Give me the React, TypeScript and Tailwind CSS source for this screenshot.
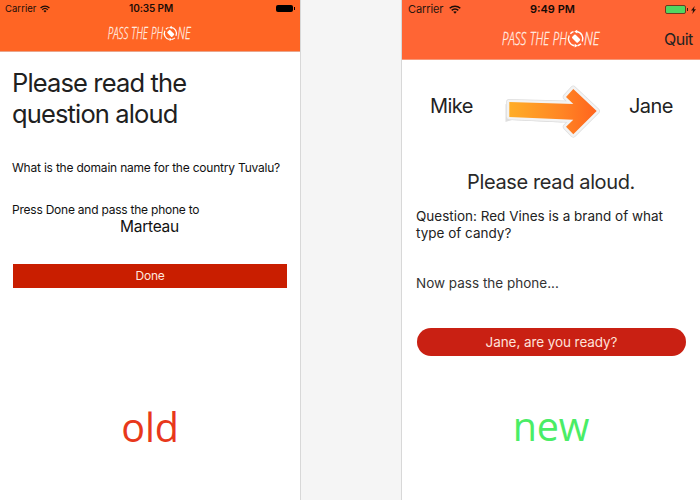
function Wifi({ className }: { className: string }) {
  return (
    <svg className={className} viewBox="0 0 12 9" fill="none" stroke="#1c0d08" strokeWidth="1.5">
      <path d="M0.7 3.3C3.7 0.4 8.3 0.4 11.3 3.3" />
      <path d="M2.7 5.4C4.6 3.6 7.4 3.6 9.3 5.4" />
      <path d="M4.2 6.8C5.3 5.9 6.7 5.9 7.8 6.8L6 8.8Z" fill="#1c0d08" stroke="none" />
    </svg>
  );
}

function Wordmark({ className }: { className: string }) {
  return (
    <svg className={className} viewBox="-2 -5 104 30" fill="#fff0e6" overflow="visible">
      <g fontFamily="'Open Sans', sans-serif" fontSize="18.5" fontWeight="300" fontStyle="italic" stroke="#fff0e6" strokeWidth="0.3">
        <text x="0" y="16" textLength="65" lengthAdjust="spacingAndGlyphs" wordSpacing="1">PASS THE PH</text>
        <text x="82" y="16" textLength="15.5" lengthAdjust="spacingAndGlyphs">NE</text>
      </g>
      <g fill="none" stroke="#fff" strokeWidth="1.4">
        <path d="M74.5 2.5A7.2 7.2 0 0 1 80.3 12.5" />
        <path d="M79 14.8A7.2 7.2 0 0 1 75.5 16.7" />
        <path d="M72.5 16.8A7.2 7.2 0 0 1 67.2 6.5" />
        <path d="M68.4 4.7A7.2 7.2 0 0 1 71.5 2.7" />
      </g>
      <path d="M75.2 0.7L72.2 2.5L75.2 4.4ZM72.7 18.6L75.7 16.7L72.7 14.8Z" fill="#fff" />
      <rect x="71.7" y="5.6" width="4.8" height="8" rx="1" fill="#fff" transform="rotate(-45 74.1 9.6)" />
    </svg>
  );
}

function Arrow() {
  const outline = "M6.3 18.3L70.3 20L63 13L70.3 5L93.7 27L70.3 50.3L63 42.7L70.3 35.7L6.3 32.7Z";
  return (
    <svg className="h-[56px] w-[98px]" viewBox="0 0 98 56">
      <defs>
        <linearGradient id="fire" x1="0" x2="1">
          <stop offset="0" stopColor="#ffad27" />
          <stop offset=".6" stopColor="#ff8524" />
          <stop offset="1" stopColor="#ff641e" />
        </linearGradient>
      </defs>
      <path d={outline} fill="#dedede" stroke="#dedede" strokeWidth="6.4" strokeLinejoin="round" />
      <path d="M2.5 20V38L9 36L60 38.5Z" fill="#dedede" />
      <path d={outline} fill="#f3f3f3" stroke="#f3f3f3" strokeWidth="5" strokeLinejoin="round" />
      <path d="M6.3 18L70.3 20L63 13L70.3 5L93.7 27L70.3 50.3L63 42.7L70.3 35.7L6.3 33Z" fill="url(#fire)" />
    </svg>
  );
}

function OldScreen() {
  return (
    <section className="h-full w-[300px] bg-white text-[#111]">
      <header className="h-[52px] border-b border-[#e9a58b] bg-[#ff6524]">
        <div className="flex h-[17px] items-center text-[#1c0d08]">
          <span className="ml-[5px] w-[35px] pt-px text-[9.5px] tracking-[0.05px]">Carrier</span>
          <Wifi className="h-[8px] w-[10px]" />
          <b className="ml-[79px] w-[46px] whitespace-nowrap text-[10px] font-semibold tracking-[-0.1px]">10:35 PM</b>
          <i className="ml-[101px] h-[7px] w-[17px] rounded-[2px] bg-black" />
          <i className="ml-px h-[3px] w-px bg-black" />
        </div>
        <Wordmark className="ml-[106px] mt-[4px] h-[25.5px] w-[88.5px]" />
      </header>
      <div className="pl-[12px] pr-[13px]">
        <h1 className="mt-[15px] whitespace-nowrap text-[25.5px] leading-[31px] tracking-[-0.86px] text-[#202020]">
          Please read the
          <br />
          question aloud
        </h1>
        <p className="mt-[30px] whitespace-nowrap text-[12px] leading-[17px] tracking-[-0.21px]">What is the domain name for the country Tuvalu?</p>
        <p className="mt-[26px] whitespace-nowrap text-[12px] leading-[16px] tracking-[-0.23px]">Press Done and pass the phone to</p>
        <p className="text-center text-[15.5px] leading-[18px] tracking-[-0.25px]">Marteau</p>
        <button className="mt-[28px] ml-px block h-[24px] w-[274px] bg-[#c91e00] text-[12px] leading-[24px] tracking-[-0.2px] text-[#ffe6df]">Done</button>
      </div>
      <div className="mt-[112px] text-center font-['Open_Sans',sans-serif] text-[39.5px] leading-[54px] tracking-[-0.2px] text-[#e8381b]">old</div>
    </section>
  );
}

function NewScreen() {
  return (
    <section className="h-full w-[298px] bg-white text-[#222]">
      <header className="h-[60px] border-b border-[#f6997a] bg-[#ff6534]">
        <div className="flex h-[19px] items-center text-[#2a150d]">
          <span className="ml-[6px] w-[41px] text-[11px] tracking-[-0.1px]">Carrier</span>
          <Wifi className="h-[9px] w-[12px]" />
          <b className="ml-[69px] w-[47px] whitespace-nowrap text-[11px] font-semibold text-[#140a07]">9:49 PM</b>
          <i className="ml-[88px] h-[9px] w-[21px] rounded-[2px] border border-[#6c3a20] bg-[#50d662]" />
          <i className="ml-px h-[3px] w-px bg-[#3c1b10]" />
          <svg className="ml-[3px] h-[8px] w-[5px]" viewBox="0 0 5 8"><path d="M3.7 0L0 4.5H2.1L1.3 8L5 3.2H2.9Z" fill="#29130a" /></svg>
        </div>
        <div className="flex items-start">
          <Wordmark className="ml-[98px] mt-[5px] h-[30px] w-[104px]" />
          <span className="ml-[60px] mt-[9px] text-[16px] leading-[22px] tracking-[-0.5px]">Quit</span>
        </div>
      </header>
      <div className="flex h-[60px] items-start pt-[24px]">
        <span className="ml-[28px] mt-[8px] w-[45px] whitespace-nowrap text-[20px] leading-[28px] tracking-[-0.6px]">Mike</span>
        <div className="ml-[28px]"><Arrow /></div>
        <span className="ml-[28px] mt-[8px] whitespace-nowrap text-[20px] leading-[28px] tracking-[-0.6px]">Jane</span>
      </div>
      <h2 className="mt-[48px] text-center text-[20px] leading-[28px] tracking-[-0.37px] text-[#292929]">Please read aloud.</h2>
      <p className="ml-[14px] mt-[12px] whitespace-nowrap text-[13.5px] leading-[17px]">
        Question: Red Vines is a brand of what
        <br />
        type of candy?
      </p>
      <p className="ml-[14px] mt-[32px] text-[13.5px] leading-[18px] text-[#333]">Now pass the phone...</p>
      <button className="ml-[15px] mt-[35.5px] block h-[28px] w-[269px] rounded-full bg-[#c92013] text-[13.5px] leading-[29px] tracking-[-0.08px] text-[#ffe1da]">Jane, are you ready?</button>
      <div className="mt-[43.5px] text-center font-['Open_Sans',sans-serif] text-[39.5px] leading-[54px] tracking-[-0.2px] text-[#4aed66]">new</div>
    </section>
  );
}

export default function App() {
  return (
    <main className="flex h-[500px] w-[700px] overflow-hidden bg-[#f5f5f5] font-['Inter',sans-serif]">
      <OldScreen />
      <div className="w-[102px] shrink-0 border-x border-[#d8d8d8]" />
      <NewScreen />
    </main>
  );
}
